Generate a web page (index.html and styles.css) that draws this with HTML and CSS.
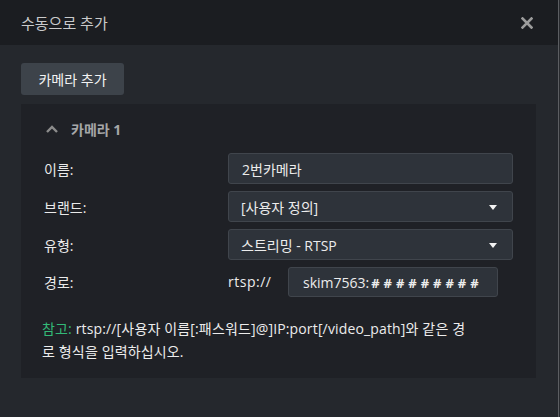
FILE: index.html
```html
<!DOCTYPE html>
<html lang="ko">
<head>
<meta charset="utf-8">
<link rel="stylesheet" href="styles.css">
</head>
<body>
<div class="dialog">
  <div class="header">
    <span class="title">수동으로 추가</span>
    <svg class="close" width="12" height="12" viewBox="0 0 12 12"><path d="M1.5 1.5L10.5 10.5M10.5 1.5L1.5 10.5" stroke="#9c9c9c" stroke-width="2.6" stroke-linecap="square"/></svg>
  </div>
  <div class="body">
    <div class="btn">카메라 추가</div>
    <div class="card">
      <div class="card-head">
        <svg class="chev" width="14" height="8" viewBox="0 0 14 8"><path d="M2 7L7 2L12 7" stroke="#8c8c8c" stroke-width="2.4" fill="none"/></svg>
        <span class="card-title">카메라 1</span>
      </div>
      <div class="rows">
        <div class="label">이름:</div>
        <div class="field">2번카메라</div>
        <div class="label">브랜드:</div>
        <div class="field select">[사용자 정의]<span class="arrow"></span></div>
        <div class="label">유형:</div>
        <div class="field select">스트리밍 - RTSP<span class="arrow"></span></div>
        <div class="label">경로:</div>
        <div class="path">
          <span class="proto">rtsp://</span>
          <div class="field pw"><span class="pwtext">skim7563:<span class="hash"># # # # # # # # #</span></span></div>
        </div>
      </div>
      <p class="note"><span class="green">참고:</span> rtsp://[사용자 이름[:패스워드]@]IP:port[/video_path]와 같은 경로 형식을 입력하십시오.</p>
    </div>
  </div>
</div>
</body>
</html>
```
FILE: styles.css
```css
* { box-sizing: border-box; }
html, body { margin: 0; padding: 0; }
body {
  background: #2a2c30;
  font-family: "Open Sans", "Noto Sans CJK KR", sans-serif;
  width: 560px;
  height: 417px;
  overflow: hidden;
}
.dialog {
  width: 559px;
  height: 417px;
  border-right: 1px solid #5c5e62;
  background: #25282d;
  display: flex;
  flex-direction: column;
}
.header {
  height: 45px;
  background: #1b1d21;
  display: flex;
  align-items: center;
  justify-content: space-between;
  padding: 0 25px 0 21px;
}
.title {
  color: #c9cacb;
  font-size: 15px;
}
.close { display: block; margin-top: 1px; }
.body {
  padding: 18px 22px 0 21px;
  display: flex;
  flex-direction: column;
  align-items: flex-start;
}
.btn {
  height: 32px;
  width: 103px;
  background: #3d434a;
  border-radius: 3px;
  color: #f2f2f2;
  font-size: 14px;
  display: flex;
  align-items: center;
  justify-content: center;
}
.card {
  margin-top: 9px;
  width: 515px;
  background: #1f2126;
  padding: 14px 23px 15px 23px;
}
.card-head {
  height: 22px;
  display: flex;
  align-items: center;
  gap: 12px;
  padding-left: 1px;
}
.chev { display: block; }
.card-title {
  color: #a6a7a8;
  font-size: 14px;
  font-weight: bold;
}
.rows {
  margin-top: 13px;
  display: grid;
  grid-template-columns: 184px 285px;
  row-gap: 7px;
  align-items: center;
}
.label {
  color: #eaeaea;
  font-size: 14px;
}
.field {
  height: 31px;
  background: #2e333a;
  border: 1px solid #40454c;
  border-radius: 3px;
  color: #ececec;
  font-size: 14px;
  display: flex;
  align-items: center;
  padding-left: 13px;
  position: relative;
}
.select { padding-left: 12px; }
.arrow {
  position: absolute;
  right: 15px;
  top: 13px;
  width: 0;
  height: 0;
  border-left: 4.5px solid transparent;
  border-right: 4.5px solid transparent;
  border-top: 5px solid #f2f2f2;
}
.path {
  display: flex;
  align-items: center;
}
.proto {
  color: #ececec;
  font-size: 14px;
  letter-spacing: 0.5px;
  width: 60px;
  margin-top: -2px;
}
.pw {
  width: 210px;
  height: 30px;
  overflow: hidden;
  white-space: nowrap;
  padding-right: 0;
  padding-left: 14px;
}
.pwtext { display: block; overflow: hidden; width: 186px; }
.hash { font-size: 13px; font-weight: bold; margin-left: 2px; letter-spacing: 0.3px; }
.note {
  margin: 20px 0 0 -2px;
  width: 430px;
  color: #ececec;
  font-size: 14px;
  letter-spacing: 0.15px;
  line-height: 23px;
}
.green { color: #33b978; }
```
